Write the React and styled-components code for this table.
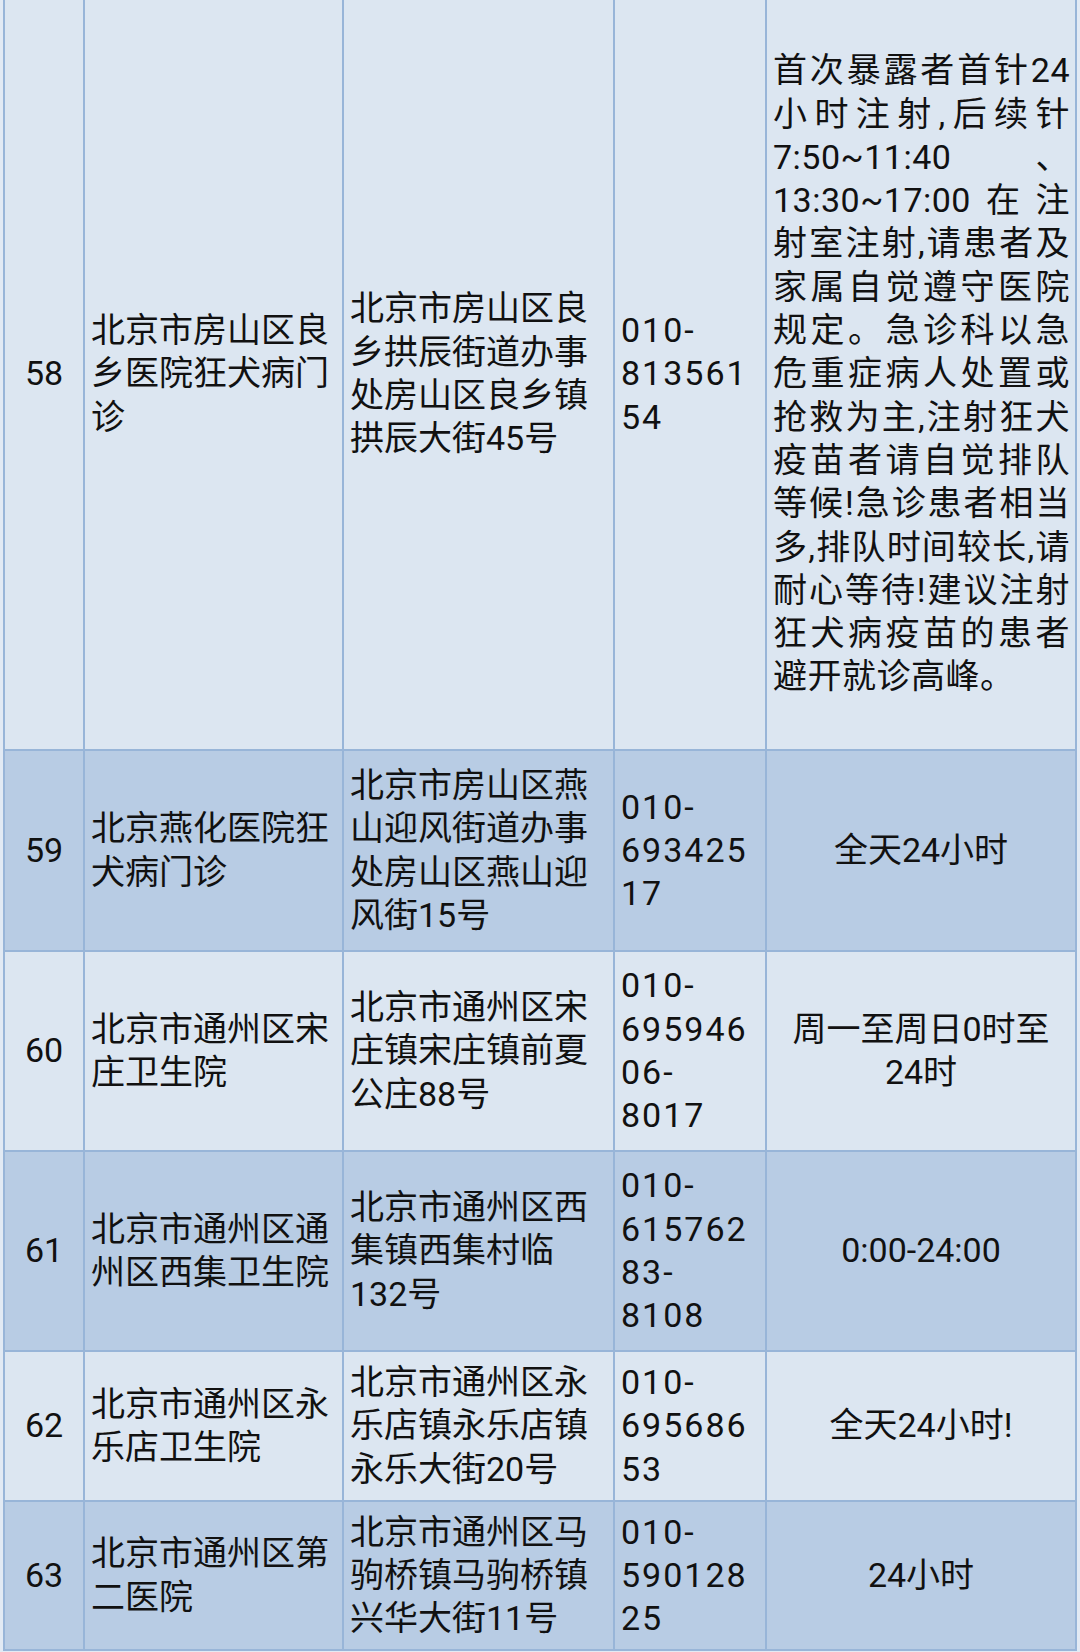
import React from "react";
import styled, { createGlobalStyle } from "styled-components";

const GlobalStyle = createGlobalStyle`
  html, body {
    margin: 0;
    padding: 0;
    background: #e2eaf4;
  }
  body {
    font-family: Roboto, "Noto Sans CJK SC", sans-serif;
    color: #111;
    -webkit-font-smoothing: antialiased;
  }
`;

const Page = styled.div`
  width: 1080px;
  height: 1652px;
  overflow: hidden;
`;

const Table = styled.div`
  box-sizing: border-box;
  width: 1074px;
  margin: -3px 0 0 3px;
  padding: 2px;
  background: #98b5d8;
  display: flex;
  flex-direction: column;
  gap: 2px;
`;

const Row = styled.div`
  display: grid;
  grid-template-columns: 78px 257px 269px 150px 308px;
  column-gap: 2px;
  height: ${(p) => p.$h}px;
`;

const Cell = styled.div`
  box-sizing: border-box;
  min-width: 0;
  display: flex;
  align-items: center;
  padding: 0 6px;
  background: ${(p) => (p.$dark ? "#b8cce4" : "#dce6f1")};
  font-size: 34px;
  line-height: 43.3px;
`;

const NumCell = styled(Cell)`
  justify-content: center;
`;

const TextCell = styled(Cell)`
  justify-content: flex-start;
`;

const PhoneCell = styled(Cell)`
  justify-content: flex-start;
  letter-spacing: 2px;
`;

const HoursCell = styled(Cell)`
  justify-content: center;
  text-align: center;
  padding: 0 9px;
`;

const NoteCell = styled(Cell)`
  padding: 0 5px 0 6px;
`;

const Text = styled.div`
  max-width: 100%;
`;

const Note = styled.div`
  width: 100%;
  text-align: justify;
  letter-spacing: 0.5px;
`;

const rows = [
  {
    no: "58",
    h: 750,
    name: "北京市房山区良乡医院狂犬病门诊",
    addr: "北京市房山区良乡拱辰街道办事处房山区良乡镇拱辰大街45号",
    phone: ["010-", "813561", "54"],
    note:
      "首次暴露者首针24小时注射,后续针7:50~11:40 、13:30~17:00在注射室注射,请患者及家属自觉遵守医院规定。急诊科以急危重症病人处置或抢救为主,注射狂犬疫苗者请自觉排队等候!急诊患者相当多,排队时间较长,请耐心等待!建议注射狂犬病疫苗的患者避开就诊高峰。",
  },
  {
    no: "59",
    h: 199,
    name: "北京燕化医院狂犬病门诊",
    addr: "北京市房山区燕山迎风街道办事处房山区燕山迎风街15号",
    phone: ["010-", "693425", "17"],
    hours: "全天24小时",
  },
  {
    no: "60",
    h: 198,
    name: "北京市通州区宋庄卫生院",
    addr: "北京市通州区宋庄镇宋庄镇前夏公庄88号",
    phone: ["010-", "695946", "06-", "8017"],
    hours: "周一至周日0时至24时",
  },
  {
    no: "61",
    h: 198,
    name: "北京市通州区通州区西集卫生院",
    addr: "北京市通州区西集镇西集村临132号",
    phone: ["010-", "615762", "83-", "8108"],
    hours: "0:00-24:00",
  },
  {
    no: "62",
    h: 148,
    name: "北京市通州区永乐店卫生院",
    addr: "北京市通州区永乐店镇永乐店镇永乐大街20号",
    phone: ["010-", "695686", "53"],
    hours: "全天24小时!",
  },
  {
    no: "63",
    h: 147,
    name: "北京市通州区第二医院",
    addr: "北京市通州区马驹桥镇马驹桥镇兴华大街11号",
    phone: ["010-", "590128", "25"],
    hours: "24小时",
  },
];

export default function App() {
  return (
    <Page>
      <GlobalStyle />
      <Table>
        {rows.map((r, i) => {
          const dark = i % 2 === 1;
          return (
            <Row key={r.no} $h={r.h}>
              <NumCell $dark={dark}>
                <Text>{r.no}</Text>
              </NumCell>
              <TextCell $dark={dark}>
                <Text>{r.name}</Text>
              </TextCell>
              <TextCell $dark={dark}>
                <Text>{r.addr}</Text>
              </TextCell>
              <PhoneCell $dark={dark}>
                <Text>
                  {r.phone.map((line, k) => (
                    <React.Fragment key={k}>
                      {k > 0 && <br />}
                      {line}
                    </React.Fragment>
                  ))}
                </Text>
              </PhoneCell>
              {r.note ? (
                <NoteCell $dark={dark}>
                  <Note>{r.note}</Note>
                </NoteCell>
              ) : (
                <HoursCell $dark={dark}>
                  <Text>{r.hours}</Text>
                </HoursCell>
              )}
            </Row>
          );
        })}
      </Table>
    </Page>
  );
}
